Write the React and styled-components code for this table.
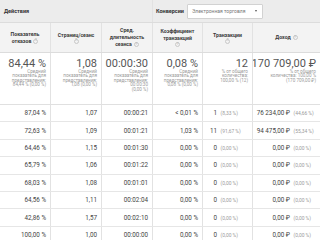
import React from 'react';
import styled, { createGlobalStyle } from 'styled-components';

const Global = createGlobalStyle`
  html, body { margin: 0; padding: 0; background: #fff; }
  body { font-family: Roboto, "Liberation Sans", Arial, sans-serif; overflow: hidden; }
  * { box-sizing: border-box; }
`;

const COLS = '51px 51px 51px 50px 50px 67px';

const Table = styled.div`
  width: 320px;
`;

const Row = styled.div`
  display: grid;
  grid-template-columns: ${COLS};
  height: ${p => p.$h}px;
  background: ${p => p.$bg || '#fff'};
  border-bottom: 1px solid ${p => p.$line || '#e6e6e6'};
`;

const Cell = styled.div`
  border-right: ${p => (p.$last ? 'none' : '1px solid #e2e2e2')};
  min-width: 0;
  overflow: hidden;
`;

const GroupCell = styled(Cell)`
  grid-column: span 3;
  display: flex;
  align-items: center;
  padding-left: ${p => p.$pad}px;
  gap: 3px;
`;

const GroupLabel = styled.span`
  font-size: 5.5px;
  font-weight: 700;
  color: #333;
  white-space: nowrap;
`;

const Select = styled.div`
  width: 76px;
  height: 15px;
  border: 1px solid #d2d2d2;
  border-radius: 1px;
  background: #fff;
  display: flex;
  align-items: center;
  justify-content: space-between;
  padding: 0 5px 0 4px;
  font-size: 5px;
  color: #777;
  white-space: nowrap;
`;

const Caret = styled.span`
  width: 0;
  height: 0;
  border-left: 1.6px solid transparent;
  border-right: 1.6px solid transparent;
  border-top: 2px solid #555;
`;

const HeadCell = styled(Cell)`
  display: flex;
  flex-direction: column;
  align-items: center;
  justify-content: center;
  text-align: center;
  font-size: 5.2px;
  line-height: 7px;
  font-weight: 700;
  color: #3a3a3a;
  padding: 0 2px;
`;

const HeadLine = styled.div`
  display: flex;
  align-items: center;
  justify-content: center;
  gap: 2px;
  white-space: nowrap;
`;

const Help = styled.span`
  display: inline-flex;
  align-items: center;
  justify-content: center;
  width: 5px;
  height: 5px;
  border-radius: 50%;
  border: 0.7px solid #c8c8c8;
  color: #bcbcbc;
  font-size: 3.4px;
  line-height: 1;
  font-weight: 700;
`;

const SumCell = styled(Cell)`
  display: flex;
  flex-direction: column;
  align-items: flex-end;
  padding: 3.5px 4px 0 0;
`;

const Big = styled.div`
  font-size: 11px;
  line-height: 13px;
  color: #555;
  white-space: nowrap;
`;

const Small = styled.div`
  font-size: 4.6px;
  line-height: 4.6px;
  color: #9a9a9a;
  text-align: right;
  white-space: nowrap;
`;

const DataCell = styled(Cell)`
  display: flex;
  align-items: center;
  justify-content: flex-end;
  padding-right: 4px;
  font-size: 6.3px;
  color: #444;
  white-space: nowrap;
`;

const SplitCell = styled(Cell)`
  display: grid;
  grid-template-columns: 1fr ${p => p.$pct}px;
  align-items: center;
  font-size: 6.3px;
  color: #444;
  white-space: nowrap;
`;

const Val = styled.span`
  text-align: right;
  padding-right: 1px;
`;

const Pct = styled.span`
  padding-left: 2.5px;
  font-size: 4.9px;
  color: #9a9a9a;
`;

const headers = [
  [['Показатель'], ['отказов', true]],
  [['Страниц/сеанс'], ['', true]],
  [['Сред.'], ['длительность'], ['сеанса', true]],
  [['Коэффициент'], ['транзакций'], ['', true]],
  [['Транзакции'], ['', true]],
  [['Доход', true]],
];

const summary = [
  ['84,44 %', ['Средний', 'показатель для', 'представления:', '84,44 % (0,00 %)']],
  ['1,08', ['Средний', 'показатель для', 'представления:', '1,08 (0,00 %)']],
  ['00:00:30', ['Средний', 'показатель для', 'представления:', '00:00:30', '(0,00 %)']],
  ['0,08 %', ['Средний', 'показатель для', 'представления:', '0,08 % (0,00 %)']],
  ['12', ['% от общего', 'количества:', '100,00 % (12)']],
  ['170 709,00 ₽', ['% от общего', 'количества: 100,00 %', '(170 709,00 ₽)']],
];

const rows = [
  ['87,04 %', '1,07', '00:00:21', '< 0,01 %', '1', '(8,33 %)', '76 234,00 ₽', '(44,66 %)'],
  ['72,63 %', '1,09', '00:01:21', '1,03 %', '11', '(91,67 %)', '94 475,00 ₽', '(55,34 %)'],
  ['64,46 %', '1,15', '00:01:30', '0,00 %', '0', '(0,00 %)', '0,00 ₽', '(0,00 %)'],
  ['65,79 %', '1,06', '00:01:22', '0,00 %', '0', '(0,00 %)', '0,00 ₽', '(0,00 %)'],
  ['68,03 %', '1,08', '00:01:01', '0,00 %', '0', '(0,00 %)', '0,00 ₽', '(0,00 %)'],
  ['64,56 %', '1,11', '00:02:04', '0,00 %', '0', '(0,00 %)', '0,00 ₽', '(0,00 %)'],
  ['42,86 %', '1,57', '00:02:10', '0,00 %', '0', '(0,00 %)', '0,00 ₽', '(0,00 %)'],
  ['100,00 %', '1,00', '00:00:00', '0,00 %', '0', '(0,00 %)', '0,00 ₽', '(0,00 %)'],
];

export default function App() {
  return (
    <>
      <Global />
      <Table>
        <Row $h={23} $bg="#ececec" $line="#dcdcdc">
          <GroupCell $pad={4}>
            <GroupLabel>Действия</GroupLabel>
          </GroupCell>
          <GroupCell $pad={3} $last>
            <GroupLabel>Конверсии</GroupLabel>
            <Select>
              <span>Электронная торговля</span>
              <Caret />
            </Select>
          </GroupCell>
        </Row>
        <Row $h={30} $bg="#f3f3f3" $line="#dcdcdc">
          {headers.map((lines, i) => (
            <HeadCell key={i} $last={i === 5}>
              {lines.map(([t, help], j) => (
                <HeadLine key={j}>
                  {t && <span>{t}</span>}
                  {help && <Help>?</Help>}
                </HeadLine>
              ))}
            </HeadCell>
          ))}
        </Row>
        <Row $h={52} $line="#e0e0e0">
          {summary.map(([big, small], i) => (
            <SumCell key={i} $last={i === 5}>
              <Big>{big}</Big>
              {small.map((s, j) => (
                <Small key={j}>{s}</Small>
              ))}
            </SumCell>
          ))}
        </Row>
        {rows.map((r, i) => (
          <Row key={i} $h={17.4}>
            <DataCell>{r[0]}</DataCell>
            <DataCell>{r[1]}</DataCell>
            <DataCell>{r[2]}</DataCell>
            <DataCell>{r[3]}</DataCell>
            <SplitCell $pct={34}>
              <Val>{r[4]}</Val>
              <Pct>{r[5]}</Pct>
            </SplitCell>
            <SplitCell $pct={29} $last>
              <Val>{r[6]}</Val>
              <Pct>{r[7]}</Pct>
            </SplitCell>
          </Row>
        ))}
      </Table>
    </>
  );
}
